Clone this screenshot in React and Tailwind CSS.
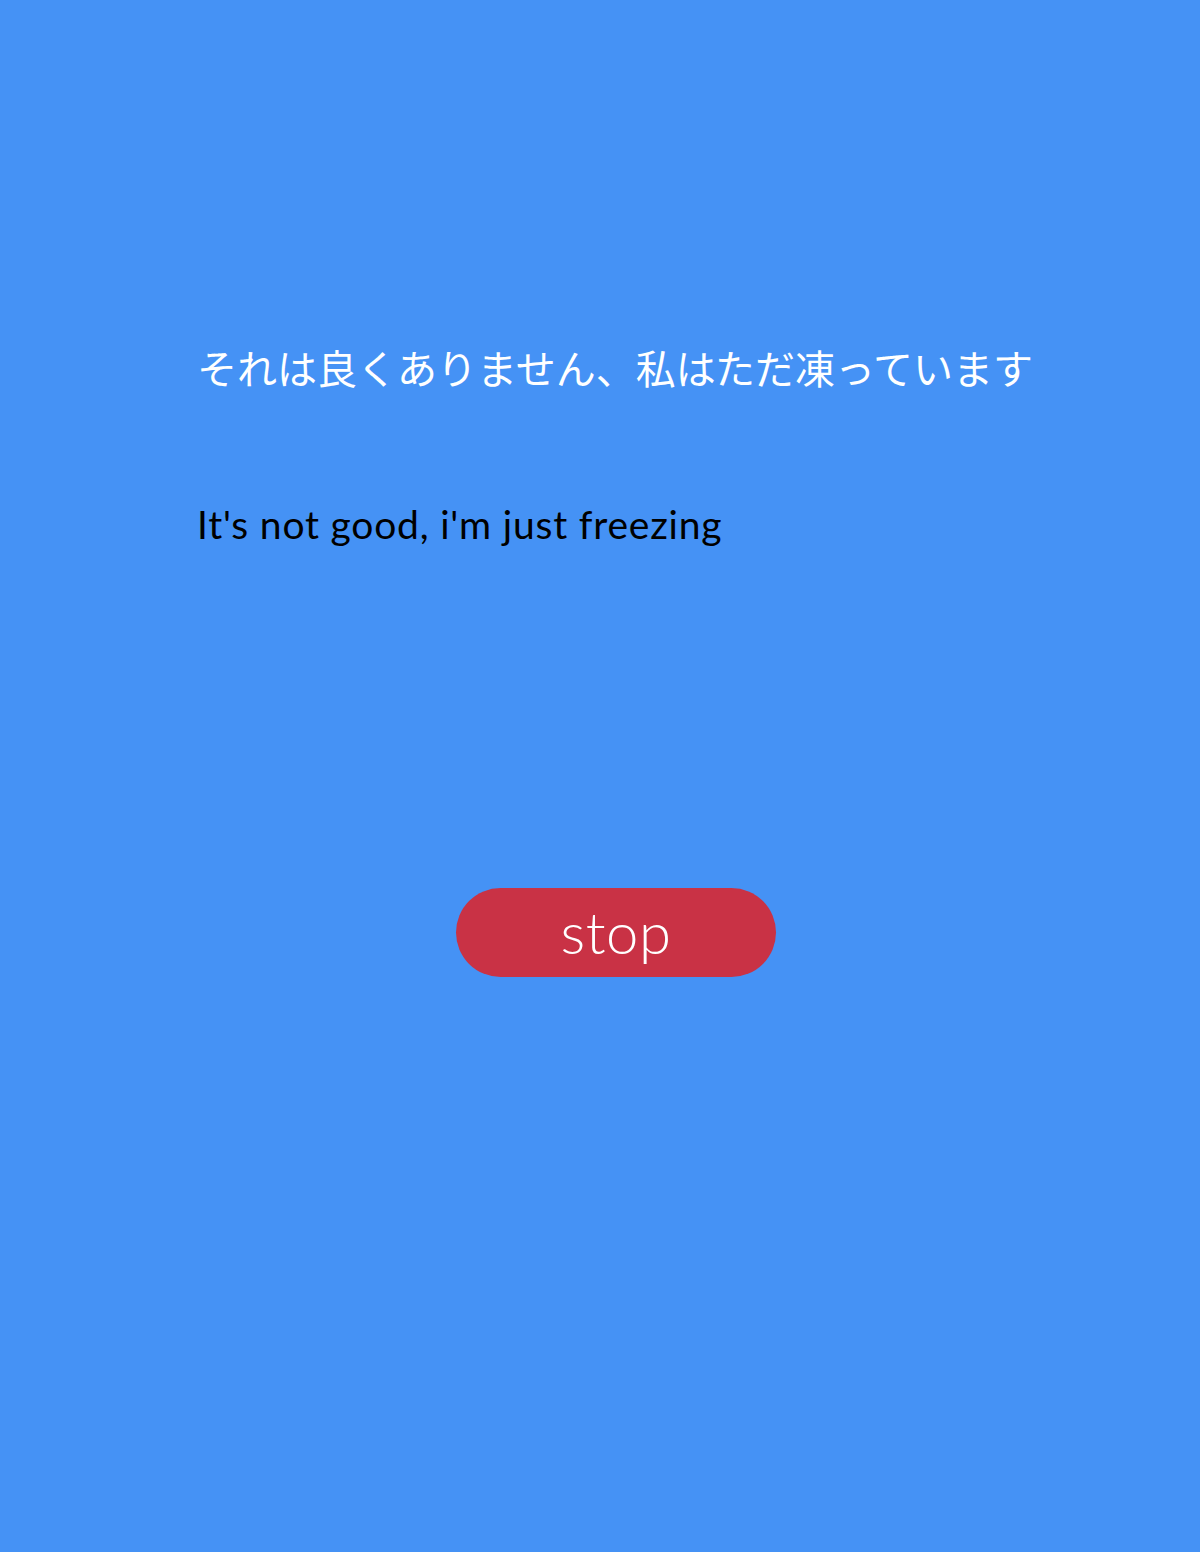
import React from 'react';

function App() {
    return (
        <div className="min-h-[1552px] w-full bg-[#4592f5] font-['Lato','Noto_Sans_CJK_JP',sans-serif]">
            <div className="ml-[197px] w-[838px] pt-[341px] flex flex-col">
                <p className="text-[40px] leading-[52px] text-white font-['Noto_Sans_CJK_JP',sans-serif] font-normal whitespace-nowrap">
                    それは良くありません、私はただ凍っています
                </p>
                <p className="mt-[106px] text-[39px] leading-[50px] tracking-[0.8px] text-black">
                    It's not good, i'm just freezing
                </p>
                <div className="mt-[339px] flex justify-center">
                    <button className="h-[89px] w-[320px] rounded-full bg-[#c93245] text-white text-[58px] tracking-[0.5px] font-light leading-none pb-[2px]">
                        stop
                    </button>
                </div>
            </div>
        </div>
    );
}

export default App;
